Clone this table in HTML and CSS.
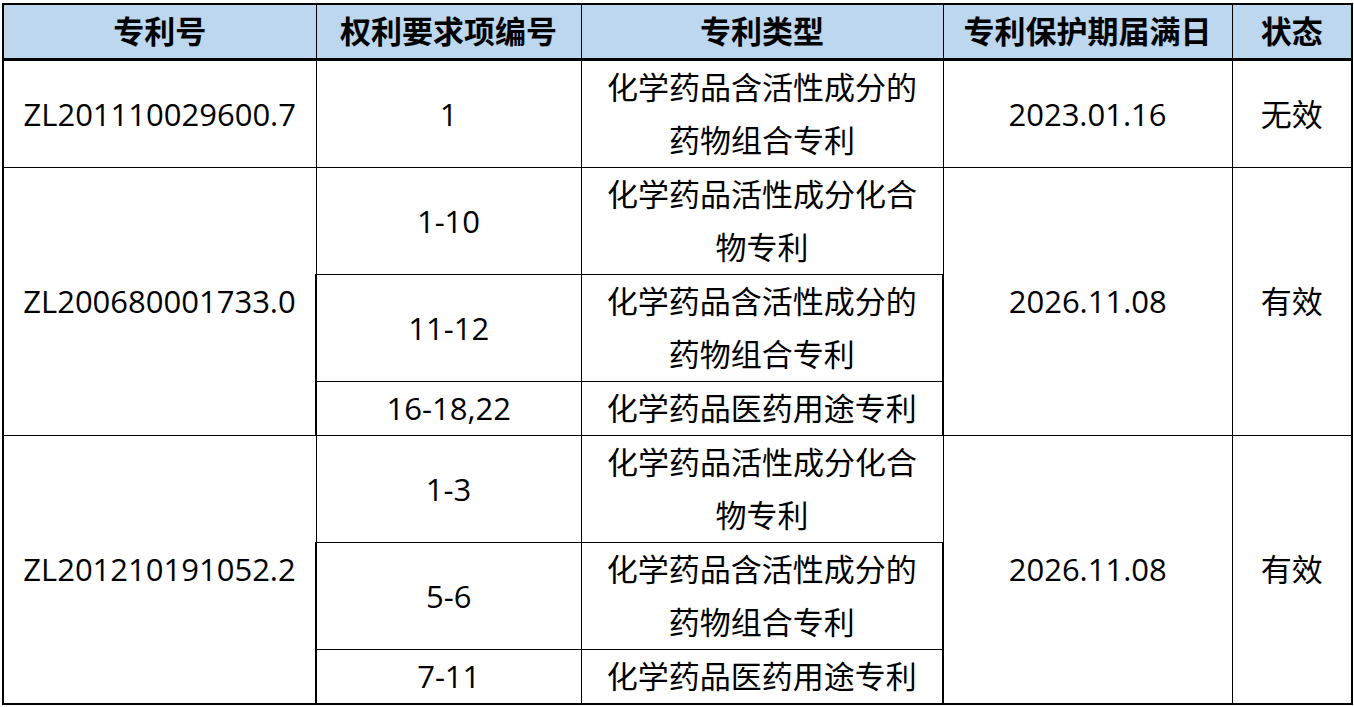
FILE: index.html
```html
<!DOCTYPE html>
<html lang="zh-CN">
<head>
<meta charset="utf-8">
<title>专利表</title>
<link rel="stylesheet" href="styles.css">
</head>
<body>
<table class="patents">
  <colgroup>
    <col class="c1"><col class="c2"><col class="c3"><col class="c4"><col class="c5">
  </colgroup>
  <thead>
    <tr>
      <th>专利号</th>
      <th>权利要求项编号</th>
      <th>专利类型</th>
      <th>专利保护期届满日</th>
      <th>状态</th>
    </tr>
  </thead>
  <tbody>
    <tr>
      <td>ZL201110029600.7</td>
      <td>1</td>
      <td>化学药品含活性成分的药物组合专利</td>
      <td>2023.01.16</td>
      <td>无效</td>
    </tr>
    <tr>
      <td rowspan="3">ZL200680001733.0</td>
      <td>1-10</td>
      <td>化学药品活性成分化合物专利</td>
      <td rowspan="3">2026.11.08</td>
      <td rowspan="3">有效</td>
    </tr>
    <tr>
      <td>11-12</td>
      <td>化学药品含活性成分的药物组合专利</td>
    </tr>
    <tr>
      <td>16-18,22</td>
      <td>化学药品医药用途专利</td>
    </tr>
    <tr>
      <td rowspan="3">ZL201210191052.2</td>
      <td>1-3</td>
      <td>化学药品活性成分化合物专利</td>
      <td rowspan="3">2026.11.08</td>
      <td rowspan="3">有效</td>
    </tr>
    <tr>
      <td>5-6</td>
      <td>化学药品含活性成分的药物组合专利</td>
    </tr>
    <tr>
      <td>7-11</td>
      <td>化学药品医药用途专利</td>
    </tr>
  </tbody>
</table>
</body>
</html>
```

FILE: styles.css
```css
html, body {
  margin: 0;
  padding: 0;
  background: #ffffff;
}

body {
  padding: 3px 0 0 2px;
  font-family: "Open Sans", "Noto Sans CJK SC", sans-serif;
  color: #000000;
}

.patents {
  border-collapse: collapse;
  table-layout: fixed;
  width: 1349px;
  font-size: 31px;
  line-height: 53px;
}

.c1 { width: 313px; }
.c2 { width: 265px; }
.c3 { width: 362px; }
.c4 { width: 289px; }
.c5 { width: 120px; }

.patents th,
.patents td {
  border: 1px solid #000000;
  padding: 0 14px;
  text-align: center;
  vertical-align: middle;
  font-weight: normal;
}

.patents thead th {
  background: #bdd7ee;
  font-weight: bold;
  border-top: 2px solid #000000;
  border-bottom: 3px solid #000000;
}

.patents tr > :first-child { border-left: 2px solid #000000; }
.patents tr > :last-child { border-right: 2px solid #000000; }
.patents tbody tr:last-child td,
.patents tbody td[rowspan] { border-bottom: 2px solid #000000; }
.patents tbody tr:nth-child(2) td[rowspan] { border-bottom: 1px solid #000000; }
```
